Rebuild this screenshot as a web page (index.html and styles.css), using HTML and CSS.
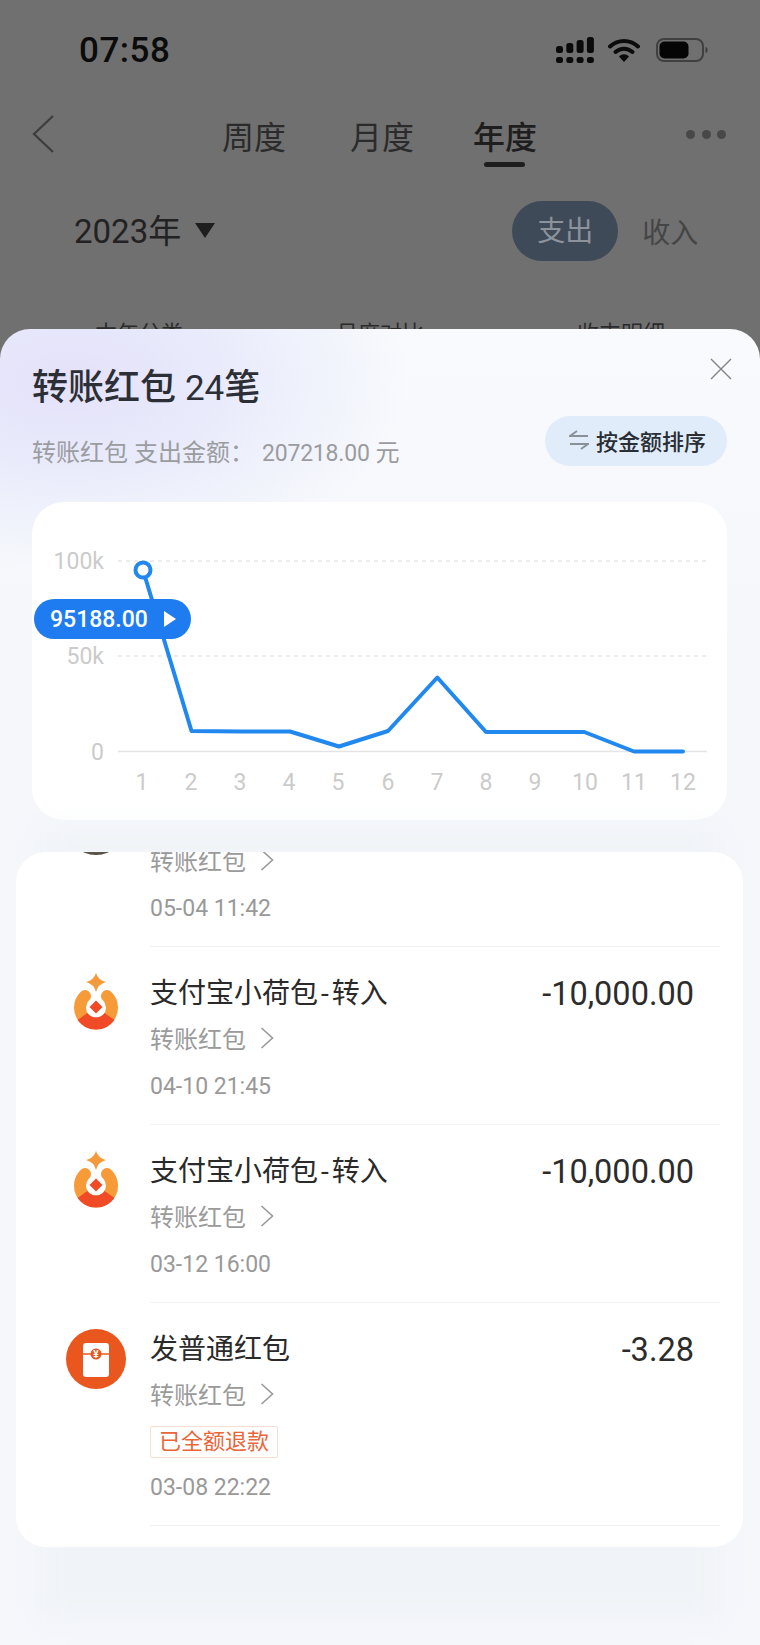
FILE: index.html
```html
<!DOCTYPE html>
<html lang="zh">
<head>
<meta charset="utf-8">
<title>转账红包</title>
<link rel="stylesheet" href="styles.css">
</head>
<body>
<div class="page">
  <div class="status">
    <span class="time">07:58</span>
    <div class="status-icons">
      <svg class="i-signal" width="38" height="26" viewBox="0 0 38 26">
        <g fill="#0b0b0b">
          <rect x="0" y="20" width="7" height="6" rx="2.500"/><rect x="10.300" y="20" width="7" height="6" rx="2.500"/><rect x="20.600" y="20" width="7" height="6" rx="2.500"/><rect x="30.900" y="20" width="7" height="6" rx="2.500"/>
          <rect x="0" y="9" width="7" height="7" rx="2.500"/><rect x="10.300" y="6" width="7" height="10" rx="2.500"/><rect x="20.600" y="3" width="7" height="13" rx="2.500"/><rect x="30.900" y="0" width="7" height="16" rx="2.500"/>
        </g>
      </svg>
      <svg class="i-wifi" width="32" height="24" viewBox="0 0 32 24">
        <path d="M2 8.500C10 1 22 1 30 8.500" fill="none" stroke="#0b0b0b" stroke-width="4" stroke-linecap="round"/>
        <path d="M7.500 14C12.500 9.500 19.500 9.500 24.500 14" fill="none" stroke="#0b0b0b" stroke-width="4" stroke-linecap="round"/>
        <path d="M11 18.500C14 15.500 18 15.500 21 18.500L16 24Z" fill="#0b0b0b"/>
      </svg>
      <svg class="i-battery" width="52" height="24" viewBox="0 0 52 24">
        <rect x="1" y="1" width="46" height="22" rx="7" fill="none" stroke="#404040" stroke-width="2"/>
        <rect x="3.500" y="3.500" width="29" height="17" rx="5" fill="#050505"/>
        <path d="M50 9.500C51.500 10.500 51.500 13.500 50 14.500Z" fill="#3c3c3c" stroke="#3c3c3c" stroke-width="1"/>
      </svg>
    </div>
  </div>

  <div class="nav">
    <svg class="i-back" width="22" height="38" viewBox="0 0 22 38"><path d="M21 1L2 19L21 37" fill="none" stroke="#3d3d3d" stroke-width="2.200"/></svg>
    <div class="tabs">
      <span class="tab">周度</span>
      <span class="tab tab-mid">月度</span>
      <span class="tab tab-active">年度</span>
    </div>
    <div class="dots"><i></i><i></i><i></i></div>
  </div>

  <div class="filter">
    <span class="year">2023年</span>
    <span class="year-caret"></span>
    <span class="seg seg-active">支出</span>
    <span class="seg">收入</span>
  </div>

  <div class="behind">
    <span>本年分类</span>
    <span>月度对比</span>
    <span>收支明细</span>
  </div>

  <section class="sheet">
    <svg class="i-close" width="22" height="22" viewBox="0 0 22 22"><path d="M1 1L21 21M21 1L1 21" stroke="#808488" stroke-width="1.400" fill="none"/></svg>
    <h1 class="title">转账红包 <span class="count">24</span>笔</h1>
    <div class="head-row">
      <p class="subtitle">转账红包 支出金额：<span class="sum">207218.00</span> 元</p>
      <button class="sort">
        <svg width="20" height="20" viewBox="0 0 20 20"><path d="M8 1L1 6H19M1 14H19L12 19" fill="none" stroke="#8a9098" stroke-width="1.800"/></svg>
        <span>按金额排序</span>
      </button>
    </div>

    <div class="chart">
      <svg class="chart-svg" width="695" height="318" viewBox="32 502 695 318">
        <g class="grid">
          <line x1="118" y1="561" x2="708" y2="561"/>
          <line x1="118" y1="656" x2="708" y2="656"/>
        </g>
        <line class="axis" x1="118" y1="751.500" x2="707" y2="751.500"/>
        <g class="ylab">
          <text x="104" y="569">100k</text>
          <text x="104" y="664">50k</text>
          <text x="104" y="760">0</text>
        </g>
        <g class="xlab">
          <text x="142" y="790">1</text><text x="191" y="790">2</text><text x="240" y="790">3</text><text x="289" y="790">4</text>
          <text x="338" y="790">5</text><text x="388" y="790">6</text><text x="437" y="790">7</text><text x="486" y="790">8</text>
          <text x="535" y="790">9</text><text x="585" y="790">10</text><text x="634" y="790">11</text><text x="683" y="790">12</text>
        </g>
        <polyline class="trend" points="143,570 191.500,731 240.500,731.500 290,731.500 339,746.500 388,731 437.300,677.500 486,732 535,732 584.300,732 634,751.500 683,751.500"/>
        <circle class="peak" cx="143" cy="570" r="7.500"/>
      </svg>
      <div class="bubble"><span>95188.00</span><i></i></div>
    </div>

    <div class="list-wrap">
      <div class="list">
        <article class="row row-scrolled">
          <div class="avatar avatar-photo"></div>
          <div class="info">
            <div class="name-line"></div>
            <div class="sub">转账红包<svg width="14" height="22" viewBox="0 0 14 22"><path d="M1.500 1L12.500 11L1.500 21" fill="none" stroke="#999" stroke-width="1.600"/></svg></div>
            <div class="when">05-04 11:42</div>
          </div>
        </article>
        <article class="row">
          <div class="avatar">
            <svg width="60" height="70" viewBox="66 966 60 70">
              <path d="M96 973Q98 980 106 982Q98 984 96 992Q94 984 86 982Q94 980 96 973Z" fill="#f59a3c"/>
              <path d="M85 996A16 16 0 1 0 107 996" fill="none" stroke="#f79a38" stroke-width="12" stroke-linecap="round"/>
              <path d="M82.500 1016.500A16.500 16.500 0 0 0 109.500 1016.500" fill="none" stroke="#f04a26" stroke-width="12"/>
              <path d="M96 1000.500L102.500 1007L96 1013.500L89.500 1007Z" fill="#f04a26"/>
            </svg>
          </div>
          <div class="info">
            <div class="name-line"><span class="name">支付宝小荷包<span class="hy">-</span>转入</span><span class="amount">-10,000.00</span></div>
            <div class="sub">转账红包<svg width="14" height="22" viewBox="0 0 14 22"><path d="M1.500 1L12.500 11L1.500 21" fill="none" stroke="#999" stroke-width="1.600"/></svg></div>
            <div class="when">04-10 21:45</div>
          </div>
        </article>
        <article class="row">
          <div class="avatar">
            <svg width="60" height="70" viewBox="66 966 60 70">
              <path d="M96 973Q98 980 106 982Q98 984 96 992Q94 984 86 982Q94 980 96 973Z" fill="#f59a3c"/>
              <path d="M85 996A16 16 0 1 0 107 996" fill="none" stroke="#f79a38" stroke-width="12" stroke-linecap="round"/>
              <path d="M82.500 1016.500A16.500 16.500 0 0 0 109.500 1016.500" fill="none" stroke="#f04a26" stroke-width="12"/>
              <path d="M96 1000.500L102.500 1007L96 1013.500L89.500 1007Z" fill="#f04a26"/>
            </svg>
          </div>
          <div class="info">
            <div class="name-line"><span class="name">支付宝小荷包<span class="hy">-</span>转入</span><span class="amount">-10,000.00</span></div>
            <div class="sub">转账红包<svg width="14" height="22" viewBox="0 0 14 22"><path d="M1.500 1L12.500 11L1.500 21" fill="none" stroke="#999" stroke-width="1.600"/></svg></div>
            <div class="when">03-12 16:00</div>
          </div>
        </article>
        <article class="row">
          <div class="avatar avatar-red">
            <svg width="60" height="60" viewBox="0 0 60 60">
              <circle cx="30" cy="30" r="30" fill="#e9571f"/>
              <rect x="17" y="14" width="26" height="34" rx="3" fill="#fff"/>
              <path d="M17 25H43" stroke="#e9571f" stroke-width="1.500"/>
              <circle cx="30" cy="25" r="5.500" fill="#e9571f"/>
              <text class="yen" x="30" y="28.500">¥</text>
            </svg>
          </div>
          <div class="info">
            <div class="name-line"><span class="name">发普通红包</span><span class="amount">-3.28</span></div>
            <div class="sub">转账红包<svg width="14" height="22" viewBox="0 0 14 22"><path d="M1.500 1L12.500 11L1.500 21" fill="none" stroke="#999" stroke-width="1.600"/></svg></div>
            <div class="tag">已全额退款</div>
            <div class="when when-tagged">03-08 22:22</div>
          </div>
        </article>
      </div>
    </div>
  </section>
</div>
</body>
</html>
```
FILE: styles.css
```css
* { box-sizing: border-box; }
html, body { margin: 0; padding: 0; }
body {
  font-family: Roboto, "Noto Sans CJK SC", sans-serif;
  background: #707070;
}
.page {
  position: relative;
  width: 760px;
  height: 1645px;
  overflow: hidden;
  background: #707070;
  color: #222;
}
.status {
  height: 100px;
  display: flex;
  align-items: center;
  padding: 0 52px 0 79px;
  justify-content: space-between;
}
.time { font-size: 35px; font-weight: 500; color: #0b0b0b; letter-spacing: 0.5px; }
.status-icons { display: flex; align-items: center; gap: 14px; }
.i-signal { display: block; }
.i-wifi { display: block; }
.i-battery { display: block; margin-left: 2px; }

.nav {
  height: 75px;
  display: flex;
  align-items: center;
  padding: 0 34px 0 32px;
}
.i-back { display: block; margin-top: -7px; flex: none; }
.tabs { display: flex; gap: 62px; margin-left: 168px; }
.tab { position: relative; font-size: 32px; line-height: 40px; color: #2b2b2b; }
.tab-mid { margin: 0 -3px 0 2px; }
.tab-active { font-weight: 500; color: #1e1e1e; }
.tab-active::after {
  content: "";
  position: absolute;
  left: 11px;
  right: 12px;
  top: 44px;
  height: 5px;
  border-radius: 3px;
  background: #1e1e1e;
}
.dots { margin-left: auto; margin-top: -7px; display: flex; gap: 6.500px; }
.dots i { width: 9px; height: 9px; border-radius: 50%; background: #484848; display: block; }

.filter {
  height: 60px;
  margin-top: 26px;
  display: flex;
  align-items: center;
  padding-left: 74px;
}
.year { font-size: 33px; color: #222; margin-bottom: 5px; }
.year-caret {
  margin-left: 14px;
  margin-right: 297px;
  margin-bottom: 2px;
  width: 0;
  height: 0;
  border-left: 10px solid transparent;
  border-right: 10px solid transparent;
  border-top: 15px solid #1e1e1e;
}
.seg { font-size: 28px; color: #454545; margin-left: 24px; }
.seg-active {
  margin-left: 0;
  width: 106px;
  height: 60px;
  line-height: 62px;
  border-radius: 30px;
  text-align: center;
  background: #3e4a58;
  color: #8c939b;
}
.behind {
  margin-top: 58px;
  display: flex;
  padding-left: 95px;
  gap: 153px;
  font-size: 22px;
  line-height: 30px;
  color: #2b2b2b;
}

.sheet {
  position: absolute;
  left: 0;
  right: 0;
  top: 329px;
  bottom: 0;
  padding-top: 37px;
  border-radius: 30px 30px 0 0;
  background:
    radial-gradient(ellipse 340px 190px at 70px 50px, #e4e1fa 0%, rgba(228, 230, 251, 0.75) 45%, rgba(240, 243, 251, 0) 100%),
    linear-gradient(180deg, #f8fafd 0%, #f5f7fb 25%, #f5f7fb 100%);
}
.i-close { position: absolute; right: 28px; top: 29px; display: block; }
.title {
  margin: 0 0 0 32px;
  height: 44px;
  font-size: 36px;
  line-height: 44px;
  font-weight: 500;
  color: #2c2f36;
}
.count { font-weight: 400; font-size: 35px; }
.head-row {
  display: flex;
  justify-content: space-between;
  align-items: flex-start;
  margin: 6px 33px 0 32px;
  height: 53px;
}
.subtitle {
  margin: 21px 0 0;
  font-size: 24px;
  line-height: 32px;
  color: #9a9ca0;
  white-space: nowrap;
}
.sum { font-size: 23px; margin-left: 8px; letter-spacing: -0.2px; }
.sort {
  width: 182px;
  height: 50px;
  border: 0;
  padding: 0 0 2px 24px;
  border-radius: 25px;
  background: #e0ecfa;
  display: flex;
  align-items: center;
  gap: 7px;
  font-family: inherit;
  font-size: 22px;
  font-weight: 500;
  color: #2a2e35;
}
.sort svg { display: block; flex: none; }

.chart {
  position: relative;
  margin: 33px 33px 0 32px;
  height: 318px;
  border-radius: 32px;
  background: #fff;
}
.chart-svg { display: block; }
.grid line { stroke: #e6e6e6; stroke-width: 1.500; stroke-dasharray: 4 4; }
.axis { stroke: #e4e4e4; stroke-width: 1.500; }
.ylab text, .xlab text { font-family: Roboto, sans-serif; font-size: 23px; fill: #cbcbcb; }
.ylab text { text-anchor: end; }
.xlab text { text-anchor: middle; }
.trend { fill: none; stroke: #2088ee; stroke-width: 4; stroke-linejoin: round; stroke-linecap: round; }
.peak { fill: #fff; stroke: #2088ee; stroke-width: 4; }
.bubble {
  position: absolute;
  left: 2px;
  top: 97px;
  width: 157px;
  height: 40px;
  border-radius: 20px;
  background: #1f7cf0;
  color: #fff;
  display: flex;
  align-items: center;
  padding-left: 16px;
  font-size: 23px;
  font-weight: 500;
}
.bubble i {
  margin-left: 16px;
  width: 0;
  height: 0;
  border-top: 8px solid transparent;
  border-bottom: 8px solid transparent;
  border-left: 12px solid #fff;
}

.list-wrap {
  position: relative;
  margin-top: 32px;
  padding: 0 17px 0 16px;
  height: 695px;
}
.list-wrap::before {
  content: "";
  position: absolute;
  left: 40px;
  right: 40px;
  top: -22px;
  bottom: -72px;
  background: #f0f3f7;
  filter: blur(12px);
}
.list {
  position: relative;
  height: 695px;
  border-radius: 30px;
  background: #fff;
  overflow: hidden;
}
.row {
  display: flex;
  padding-top: 30px;
}
.row-scrolled { margin-top: -83.500px; }
.avatar {
  flex: none;
  width: 134px;
  padding-left: 50px;
}
.avatar svg { display: block; margin-top: -11px; }
.avatar-red svg { margin-top: -4px; }
.avatar-photo::before {
  content: "";
  display: block;
  width: 60px;
  height: 60px;
  margin-top: -4px;
  border-radius: 50%;
  background: linear-gradient(180deg, #c9c0a8 0%, #8e8470 85%, #4a463f 100%);
}
.info {
  flex: 1;
  margin-right: 23px;
  padding-bottom: 20px;
  border-bottom: 1.500px solid #f1f2f4;
}
.name-line {
  display: flex;
  justify-content: space-between;
  padding-right: 26px;
  height: 34px;
  line-height: 34px;
}
.name { font-size: 28px; color: #2a2a2a; }
.hy { padding: 0 3px; }
.amount { font-size: 32.500px; color: #2c2c2c; }
.sub {
  margin-top: 10px;
  height: 34px;
  display: flex;
  align-items: center;
  gap: 14px;
  font-size: 24px;
  color: #9a9a9a;
}
.sub svg { display: block; }
.tag {
  margin-top: 15px;
  width: 128px;
  height: 32px;
  line-height: 30px;
  text-align: center;
  border: 1px solid #f7dcd0;
  border-radius: 2px;
  font-size: 22px;
  color: #e8663a;
}
.when {
  margin-top: 15px;
  height: 34px;
  line-height: 34px;
  font-size: 23px;
  color: #999;
}
.when-tagged { margin-top: 13px; }
.yen { font-family: Roboto, sans-serif; font-size: 10px; font-weight: 700; fill: #fff; text-anchor: middle; }
```
